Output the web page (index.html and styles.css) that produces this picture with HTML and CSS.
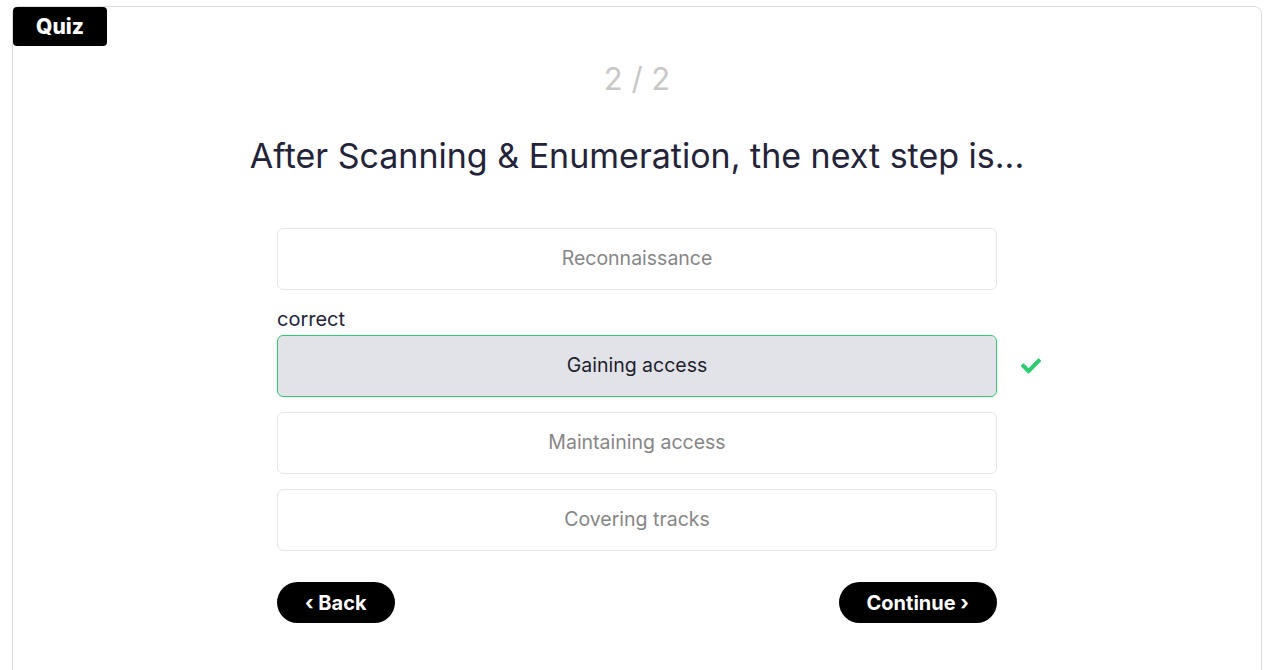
FILE: index.html
```html
<!DOCTYPE html>
<html>
<head>
<meta charset="utf-8">
<link rel="stylesheet" href="styles.css">
</head>
<body>
<div class="card">
  <div class="badge">Quiz</div>
  <div class="content">
    <div class="counter">2 / 2</div>
    <h1 class="question">After Scanning &amp; Enumeration, the next step is...</h1>
    <div class="options">
      <div class="option">Reconnaissance</div>
      <div class="option-group">
        <div class="label">correct</div>
        <div class="option-row">
          <div class="option selected">Gaining access</div>
          <svg class="check" viewBox="0 0 512 512" width="20" height="20"><path fill="#2ecc71" d="M173.9 439.4l-166.4-166.4c-10-10-10-26.2 0-36.2l36.2-36.2c10-10 26.2-10 36.2 0L192 312.7 432.1 72.6c10-10 26.2-10 36.2 0l36.2 36.2c10 10 10 26.2 0 36.2L210.1 439.4c-10 10-26.2 10-36.2 0z"/></svg>
        </div>
      </div>
      <div class="option">Maintaining access</div>
      <div class="option">Covering tracks</div>
    </div>
    <div class="nav">
      <button class="btn">‹ Back</button>
      <button class="btn">Continue ›</button>
    </div>
  </div>
</div>
</body>
</html>
```
FILE: styles.css
```css
html, body { margin: 0; padding: 0; background: #fff; }
body {
  font-family: Inter, "Open Sans", sans-serif;
  padding: 6px 14px 0 12px;
}
.card {
  position: relative;
  border: 1px solid #dcdcdc;
  border-radius: 8px;
  height: 700px;
  box-sizing: border-box;
}
.badge {
  position: absolute;
  top: 0; left: 0;
  background: #000;
  color: #fff;
  font-weight: 800;
  font-size: 21px;
  width: 94px;
  height: 39px;
  line-height: 39px;
  text-align: center;
  border-radius: 4px;
}
.content {
  width: 720px;
  margin: 0 auto;
  display: flex;
  flex-direction: column;
  align-items: stretch;
}
.counter {
  margin-top: 55px;
  text-align: center;
  color: #c8c8c8;
  font-size: 31px;
  line-height: 34px;
}
.question {
  margin: 40px -100px 0;
  text-align: center;
  font-weight: 400;
  font-size: 34px;
  line-height: 40px;
  color: #23233a;
}
.options {
  margin-top: 52px;
  display: flex;
  flex-direction: column;
  gap: 15px;
}
.option {
  height: 62px;
  box-sizing: border-box;
  border: 1px solid #e6e6e6;
  border-radius: 6px;
  display: flex;
  align-items: center;
  justify-content: center;
  font-size: 19.5px;
  color: #868686;
  padding-bottom: 2px;
}
.option-group { display: flex; flex-direction: column; margin-top: 1px; }
.label {
  font-size: 20px;
  color: #23233a;
  line-height: 26px;
  margin-bottom: 3px;
}
.option-row { position: relative; }
.option.selected {
  background: #e1e3e8;
  border-color: #2ecc71;
  color: #1e1e2e;
}
.check {
  position: absolute;
  left: 744px;
  top: 21px;
}
.nav {
  margin-top: 31px;
  display: flex;
  justify-content: space-between;
}
.btn {
  background: #000;
  color: #fff;
  border: none;
  border-radius: 21px;
  height: 41px;
  padding: 0 28px;
  font-family: inherit;
  font-weight: 700;
  font-size: 20px;
}
```
